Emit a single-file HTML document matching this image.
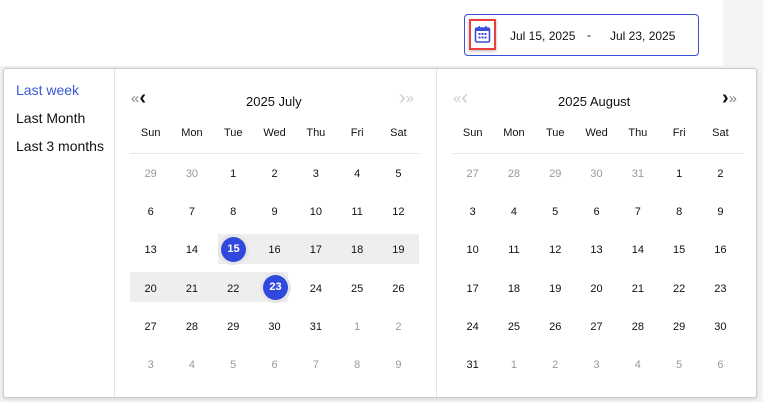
<!DOCTYPE html>
<html><head><meta charset="utf-8"><style>
*{margin:0;padding:0;box-sizing:border-box}
body{width:763px;height:402px;background:#f4f4f4;position:relative;overflow:hidden;font-family:"Liberation Sans",sans-serif;color:#111}
.top{position:absolute;left:0;top:0;width:723px;height:66px;background:#fff}
.inp{position:absolute;left:464px;top:14px;width:235px;height:42px;border:1px solid #3a4fd8;border-radius:4px;background:#fff;font-size:12px}
.ic{position:absolute;left:4px;top:4px;width:27px;height:31px;border:2px solid #e84040;box-shadow:0 1px 3px rgba(0,0,0,.3)}
.pop{position:absolute;left:3px;top:68px;width:754px;height:330px;background:#fff;border:1px solid #ccc;border-radius:3px;box-shadow:0 1px 4px rgba(0,0,0,.15)}
.side{position:absolute;left:0;top:0;width:111px;height:100%;border-right:1px solid #e3e3e3;font-size:14px}
.side div{position:absolute;left:12px}
.sep{position:absolute;left:432px;top:0;width:1px;height:100%;background:#e3e3e3}
.grid{position:absolute;display:grid;grid-template-columns:repeat(7,41.3px);grid-auto-rows:38.2px;font-size:11px;text-align:center}
.grid div{line-height:38.2px;position:relative;z-index:2}
.h div{line-height:20px}
.g{color:#999}
.t{position:absolute;font-size:13px}
.hl{position:absolute;background:#eeeeee;z-index:1}
.sel{position:absolute;width:25px;height:25px;border-radius:50%;background:#3049dc;color:#fff;font-weight:bold;font-size:11px;text-align:center;line-height:25px;z-index:3;box-shadow:0 0 0 3px #e6e6e6}
.line{position:absolute;height:1px;background:#e6e6e6}
.nav{position:absolute;font-size:15px;line-height:20px}
.nav b{font-size:20px;vertical-align:-1px}
</style></head><body>
<div class="top"></div>
<div class="inp">
 <div class="ic"><svg width="23" height="27" viewBox="0 0 23 27"><rect x="4.5" y="7" width="14" height="14" rx="1.5" fill="none" stroke="#3a4fd8" stroke-width="1.6"/><rect x="4.5" y="7" width="14" height="3" fill="#3a4fd8"/><rect x="7.5" y="5" width="1.5" height="3" fill="#3a4fd8"/><rect x="14" y="5" width="1.5" height="3" fill="#3a4fd8"/><g fill="#3a4fd8"><rect x="7.5" y="12" width="2" height="2"/><rect x="10.5" y="12" width="2" height="2"/><rect x="13.5" y="12" width="2" height="2"/><rect x="7.5" y="15.5" width="2" height="2"/><rect x="10.5" y="15.5" width="2" height="2"/><rect x="13.5" y="15.5" width="2" height="2"/></g></svg></div>
 <span style="position:absolute;left:45px;top:14px">Jul 15, 2025</span>
 <span style="position:absolute;left:122px;top:13px">-</span>
 <span style="position:absolute;left:145px;top:14px">Jul 23, 2025</span>
</div>
<div class="pop">
 <div class="side">
  <div style="top:13px;color:#3a5ad8">Last week</div>
  <div style="top:41px">Last Month</div>
  <div style="top:69px">Last 3 months</div>
 </div>
 <div class="sep"></div>
 <div class="nav" style="left:127px;top:19px"><span style="color:#888">«</span><b>‹</b></div>
 <div class="t" style="left:242px;top:25px">2025 July</div>
 <div class="nav" style="left:395px;top:19px;color:#ccc"><b style="font-weight:normal">›</b>»</div>
 <div class="grid h" style="left:126px;top:54px"><div>Sun</div><div>Mon</div><div>Tue</div><div>Wed</div><div>Thu</div><div>Fri</div><div>Sat</div></div>
 <div class="line" style="left:126px;top:84px;width:289px"></div>
 <div class="hl" style="left:214px;top:165px;width:201px;height:30px"></div>
 <div class="hl" style="left:126px;top:203px;width:158px;height:30px"></div>
 <div class="sel" style="left:217px;top:168px">15</div>
 <div class="sel" style="left:259px;top:206px">23</div>
 <div class="grid" style="left:126px;top:86px">
  <div class="g">29</div><div class="g">30</div><div>1</div><div>2</div><div>3</div><div>4</div><div>5</div>
  <div>6</div><div>7</div><div>8</div><div>9</div><div>10</div><div>11</div><div>12</div>
  <div>13</div><div>14</div><div></div><div>16</div><div>17</div><div>18</div><div>19</div>
  <div>20</div><div>21</div><div>22</div><div></div><div>24</div><div>25</div><div>26</div>
  <div>27</div><div>28</div><div>29</div><div>30</div><div>31</div><div class="g">1</div><div class="g">2</div>
  <div class="g">3</div><div class="g">4</div><div class="g">5</div><div class="g">6</div><div class="g">7</div><div class="g">8</div><div class="g">9</div>
 </div>
 <div class="nav" style="left:449px;top:19px;color:#ccc">«<b style="font-weight:normal">‹</b></div>
 <div class="t" style="left:554px;top:25px">2025 August</div>
 <div class="nav" style="left:718px;top:19px"><b>›</b><span style="color:#888">»</span></div>
 <div class="grid h" style="left:448px;top:54px"><div>Sun</div><div>Mon</div><div>Tue</div><div>Wed</div><div>Thu</div><div>Fri</div><div>Sat</div></div>
 <div class="line" style="left:448px;top:84px;width:291px"></div>
 <div class="grid" style="left:448px;top:86px">
  <div class="g">27</div><div class="g">28</div><div class="g">29</div><div class="g">30</div><div class="g">31</div><div>1</div><div>2</div>
  <div>3</div><div>4</div><div>5</div><div>6</div><div>7</div><div>8</div><div>9</div>
  <div>10</div><div>11</div><div>12</div><div>13</div><div>14</div><div>15</div><div>16</div>
  <div>17</div><div>18</div><div>19</div><div>20</div><div>21</div><div>22</div><div>23</div>
  <div>24</div><div>25</div><div>26</div><div>27</div><div>28</div><div>29</div><div>30</div>
  <div>31</div><div class="g">1</div><div class="g">2</div><div class="g">3</div><div class="g">4</div><div class="g">5</div><div class="g">6</div>
 </div>
</div>
</body></html>
